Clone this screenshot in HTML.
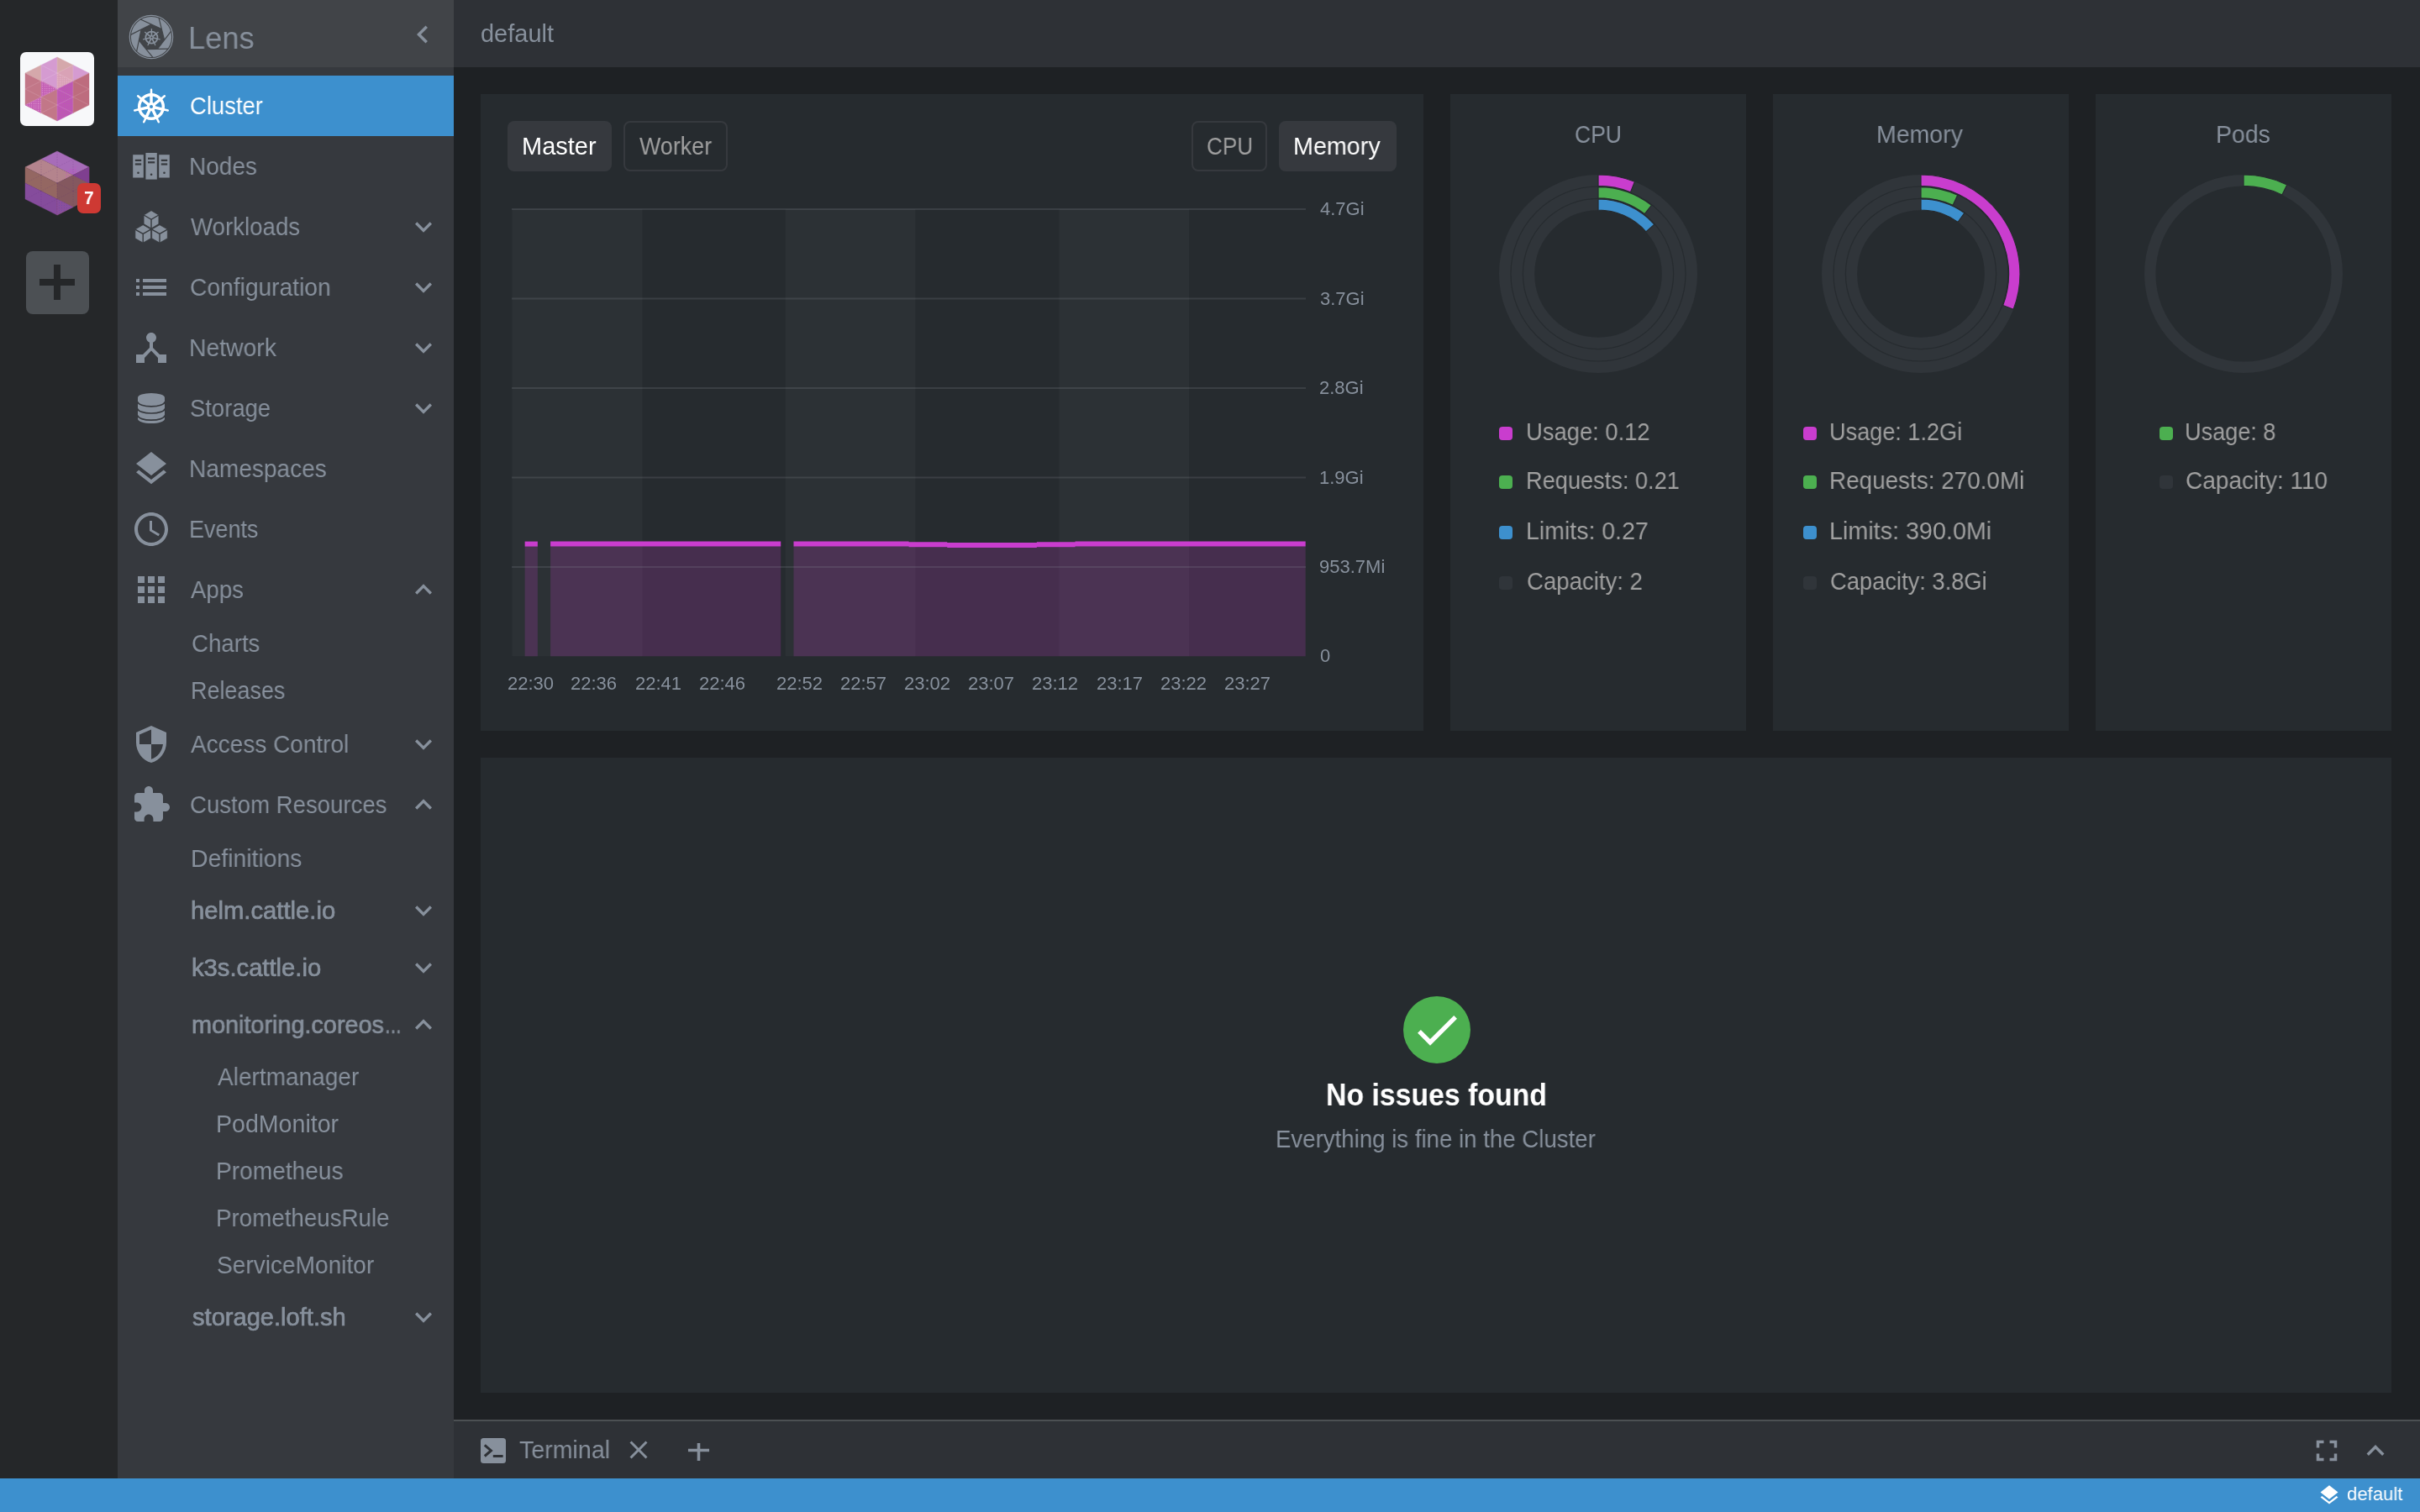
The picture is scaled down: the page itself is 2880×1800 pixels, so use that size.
<!DOCTYPE html>
<html lang="en"><head><meta charset="utf-8"><title>Lens</title>
<style>
html,body{margin:0;padding:0;background:#1e2124;}
body{width:2880px;height:1800px;position:relative;overflow:hidden;font-family:"Liberation Sans",sans-serif;}
.b{position:absolute;}
.tx{position:absolute;white-space:nowrap;line-height:1;will-change:transform;transform-origin:0 0;}
.ic{position:absolute;overflow:visible;}
.md{-webkit-text-stroke:0.7px currentColor;}
@media (max-width:1440px){body{zoom:.5}}
</style></head><body>

<div class="b" style="left:0px;top:0px;width:140px;height:1760px;background:#252729;"></div>
<div class="b" style="left:24px;top:62px;width:88px;height:88px;background:#f7f8fa;border-radius:7px"></div>
<svg class="ic" style="left:0;top:0" width="140" height="400" viewBox="0 0 140 400"><defs><pattern id="dotsA" width="2.6" height="2.6" patternUnits="userSpaceOnUse"><circle cx="1.3" cy="1.3" r="0.6" fill="#c93dce" fill-opacity="0.75"/></pattern><pattern id="dotsB" width="2.6" height="2.6" patternUnits="userSpaceOnUse"><circle cx="1.3" cy="1.3" r="0.55" fill="#f0c0e0" fill-opacity="0.7"/></pattern><pattern id="dotsC" width="3" height="3" patternUnits="userSpaceOnUse"><circle cx="1.5" cy="1.5" r="0.6" fill="#5b4aa8" fill-opacity="0.55"/></pattern></defs><polygon fill="#d5a8ab" stroke="#d5a8ab" stroke-width="0.4" points="30,87 49,77.5 49,96.5"/><polygon fill="#d59bd1" stroke="#d59bd1" stroke-width="0.4" points="49,77.5 68,68 68,106 49,96.5"/><polygon fill="#d5a8ab" stroke="#d5a8ab" stroke-width="0.4" points="68,68 87,77.5 87,96.5 68,106"/><polygon fill="#d9a2b6" stroke="#d9a2b6" stroke-width="0.4" points="68,87 87,77.5 87,96.5 68,106"/><polygon fill="#d59bd1" stroke="#d59bd1" stroke-width="0.4" points="87,77.5 106,87 87,96.5"/><polygon fill="#c27788" stroke="#c27788" stroke-width="0.4" points="30,87 49,96.5 49,134.5 30,125"/><polygon fill="#c45fb5" stroke="#c45fb5" stroke-width="0.4" points="30,125 49,115.5 49,134.5"/><polygon fill="#c27788" stroke="#c27788" stroke-width="0.4" points="49,96.5 68,106 68,144 49,134.5"/><polygon fill="#c45fb5" stroke="#c45fb5" stroke-width="0.4" points="49,96.5 68,106 49,115.5"/><polygon fill="#bb5cb0" stroke="#bb5cb0" stroke-width="0.4" points="68,106 87,96.5 87,134.5 68,144"/><polygon fill="#bd6c7e" stroke="#bd6c7e" stroke-width="0.4" points="87,96.5 106,87 106,125 87,134.5"/><polygon fill="url(#dotsA)" points="68,106 87,96.5 87,134.5 68,144"/><polygon fill="url(#dotsB)" points="49,96.5 68,106 49,115.5"/><polygon fill="url(#dotsB)" points="30,125 49,115.5 49,134.5"/><polygon fill="url(#dotsB)" points="68,87 87,96.5 68,106"/><path d="M68.0 87.0L87.0 96.5M68.0 87.0L87.0 77.5M87.0 96.5L87.0 77.5M68 106L68 68M87.0 96.5L87.0 115.5M87.0 96.5L106.0 106.0M87.0 115.5L106.0 106.0M68 106L106 87M87.0 115.5L68.0 125.0M87.0 115.5L87.0 134.5M68.0 125.0L87.0 134.5M68 106L106 125M68.0 125.0L49.0 115.5M68.0 125.0L49.0 134.5M49.0 115.5L49.0 134.5M68 106L68 144M49.0 115.5L49.0 96.5M49.0 115.5L30.0 106.0M49.0 96.5L30.0 106.0M68 106L30 125M49.0 96.5L68.0 87.0M49.0 96.5L49.0 77.5M68.0 87.0L49.0 77.5M68 106L30 87" stroke="#ffffff" stroke-opacity="0.22" stroke-width="0.6" fill="none" /><polygon fill="#a76cb9" stroke="#a76cb9" stroke-width="0.4" points="49,189.5 68,180 106,199 87,208.5"/><polygon fill="#b4848d" stroke="#b4848d" stroke-width="0.4" points="30,199 49,189.5 87,208.5 68,218"/><polygon fill="#946762" stroke="#946762" stroke-width="0.4" points="30,199 68,218 68,237 30,218"/><polygon fill="#854c9c" stroke="#854c9c" stroke-width="0.4" points="30,218 68,237 68,256 30,237"/><polygon fill="#84585f" stroke="#84585f" stroke-width="0.4" points="68,218 106,199 106,237 68,256"/><polygon fill="#7f3f90" stroke="#7f3f90" stroke-width="0.4" points="87,208.5 106,199 106,218"/><polygon fill="#8a4f9c" stroke="#8a4f9c" stroke-width="0.4" points="68,237 87,246.5 68,256"/><polygon fill="url(#dotsC)" points="68,237 87,246.5 68,256"/><polygon fill="url(#dotsA)" points="77,204 92,197 92,206 77,213"/><path d="M68.0 199.0L87.0 208.5M68.0 199.0L87.0 189.5M87.0 208.5L87.0 189.5M68 218L68 180M87.0 208.5L87.0 227.5M87.0 208.5L106.0 218.0M87.0 227.5L106.0 218.0M68 218L106 199M87.0 227.5L68.0 237.0M87.0 227.5L87.0 246.5M68.0 237.0L87.0 246.5M68 218L106 237M68.0 237.0L49.0 227.5M68.0 237.0L49.0 246.5M49.0 227.5L49.0 246.5M68 218L68 256M49.0 227.5L49.0 208.5M49.0 227.5L30.0 218.0M49.0 208.5L30.0 218.0M68 218L30 237M49.0 208.5L68.0 199.0M49.0 208.5L49.0 189.5M68.0 199.0L49.0 189.5M68 218L30 199" stroke="#5b2a78" stroke-opacity="0.28" stroke-width="0.7" fill="none" stroke-dasharray="1.5 1.5"/></svg>
<div class="b" style="left:92px;top:218px;width:28px;height:36px;background:#ce3933;border-radius:7px"></div>
<div class="b" style="left:30.5px;top:298.5px;width:75px;height:75px;background:#4c5054;border-radius:8px"></div>
<div class="b" style="left:47px;top:332px;width:42px;height:8px;background:#252729;"></div>
<div class="b" style="left:64px;top:315px;width:8px;height:42px;background:#252729;"></div>
<div class="b" style="left:140px;top:0px;width:400px;height:1760px;background:#36393e;"></div>
<div class="b" style="left:140px;top:0px;width:400px;height:80px;background:#414448;"></div>
<svg class="ic" style="left:0;top:0" width="540" height="80" viewBox="0 0 540 80"><circle cx="180" cy="44" r="25.7" fill="none" stroke="#87909c" stroke-width="1.2"/><circle cx="180" cy="44" r="24.1" fill="#87909c"/><polygon points="180.13,29.00 192.35,34.63 195.57,47.68 187.37,58.35 173.92,58.58 165.35,48.21 168.11,35.05" fill="#414448"/><g stroke="#414448" stroke-width="1.2"><line x1="192.35" y1="34.63" x2="167.14" y2="23.03"/><line x1="195.57" y1="47.68" x2="189.01" y2="21.11"/><line x1="187.37" y1="58.35" x2="203.64" y2="37.19"/><line x1="173.92" y1="58.58" x2="200.14" y2="58.12"/><line x1="165.35" y1="48.21" x2="182.12" y2="68.51"/><line x1="168.11" y1="35.05" x2="162.59" y2="61.38"/><line x1="180.13" y1="29.00" x2="155.54" y2="41.38"/></g><g stroke="#87909c" stroke-width="1.58" stroke-linecap="round" fill="none"><circle cx="180.4" cy="44.6" r="7.08" stroke-width="1.73"/><line x1="180.4" y1="44.6" x2="180.40" y2="37.18" stroke-width="1.73"/><line x1="180.40" y1="37.18" x2="180.40" y2="34.55" stroke-width="1.24"/><line x1="180.4" y1="44.6" x2="186.21" y2="39.97" stroke-width="1.73"/><line x1="186.21" y1="39.97" x2="188.26" y2="38.33" stroke-width="1.24"/><line x1="180.4" y1="44.6" x2="187.64" y2="46.25" stroke-width="1.73"/><line x1="187.64" y1="46.25" x2="190.20" y2="46.84" stroke-width="1.24"/><line x1="180.4" y1="44.6" x2="183.62" y2="51.29" stroke-width="1.73"/><line x1="183.62" y1="51.29" x2="184.76" y2="53.65" stroke-width="1.24"/><line x1="180.4" y1="44.6" x2="177.18" y2="51.29" stroke-width="1.73"/><line x1="177.18" y1="51.29" x2="176.04" y2="53.65" stroke-width="1.24"/><line x1="180.4" y1="44.6" x2="173.16" y2="46.25" stroke-width="1.73"/><line x1="173.16" y1="46.25" x2="170.60" y2="46.84" stroke-width="1.24"/><line x1="180.4" y1="44.6" x2="174.59" y2="39.97" stroke-width="1.73"/><line x1="174.59" y1="39.97" x2="172.54" y2="38.33" stroke-width="1.24"/></g><circle cx="180.4" cy="44.6" r="2.57" fill="#87909c"/><circle cx="180.4" cy="44.6" r="0.99" fill="#414448"/></svg>
<svg class="ic" style="left:482.00px;top:20.00px" width="42" height="42" viewBox="0 0 24 24"><path fill="#87909c" d="M15.41 16.59L10.83 12l4.59-4.59L14 6l-6 6 6 6 1.41-1.41z"/></svg>
<div class="b" style="left:140px;top:90px;width:400px;height:72px;background:#3d90ce;"></div>
<svg class="ic" style="left:0;top:0" width="540" height="1760" viewBox="0 0 540 1760"><g stroke="#ffffff" stroke-width="3.20" stroke-linecap="round" fill="none"><circle cx="180" cy="127" r="14.30" stroke-width="3.50"/><line x1="180" y1="127" x2="180.00" y2="112.00" stroke-width="3.50"/><line x1="180.00" y1="112.00" x2="180.00" y2="106.70" stroke-width="2.50"/><line x1="180" y1="127" x2="191.73" y2="117.65" stroke-width="3.50"/><line x1="191.73" y1="117.65" x2="195.87" y2="114.34" stroke-width="2.50"/><line x1="180" y1="127" x2="194.62" y2="130.34" stroke-width="3.50"/><line x1="194.62" y1="130.34" x2="199.79" y2="131.52" stroke-width="2.50"/><line x1="180" y1="127" x2="186.51" y2="140.51" stroke-width="3.50"/><line x1="186.51" y1="140.51" x2="188.81" y2="145.29" stroke-width="2.50"/><line x1="180" y1="127" x2="173.49" y2="140.51" stroke-width="3.50"/><line x1="173.49" y1="140.51" x2="171.19" y2="145.29" stroke-width="2.50"/><line x1="180" y1="127" x2="165.38" y2="130.34" stroke-width="3.50"/><line x1="165.38" y1="130.34" x2="160.21" y2="131.52" stroke-width="2.50"/><line x1="180" y1="127" x2="168.27" y2="117.65" stroke-width="3.50"/><line x1="168.27" y1="117.65" x2="164.13" y2="114.34" stroke-width="2.50"/></g><circle cx="180" cy="127" r="5.20" fill="#ffffff"/><circle cx="180" cy="127" r="2.00" fill="#3d90ce"/><rect x="158.2" y="184.2" width="12.600000000000023" height="27.30000000000001" fill="#87909c"/><rect x="160.79999999999998" y="189.79999999999998" width="7.400000000000023" height="2.2" fill="#36393e"/><rect x="160.79999999999998" y="194.39999999999998" width="7.400000000000023" height="2.2" fill="#36393e"/><circle cx="164.5" cy="205.7" r="1.3" fill="#36393e"/><rect x="173.4" y="182" width="13.400000000000006" height="31.599999999999994" fill="#87909c"/><rect x="176.0" y="187.6" width="8.200000000000006" height="2.2" fill="#36393e"/><rect x="176.0" y="192.2" width="8.200000000000006" height="2.2" fill="#36393e"/><circle cx="180.10000000000002" cy="207.79999999999998" r="1.3" fill="#36393e"/><rect x="189.2" y="184.2" width="12.600000000000023" height="27.30000000000001" fill="#87909c"/><rect x="191.79999999999998" y="189.79999999999998" width="7.400000000000023" height="2.2" fill="#36393e"/><rect x="191.79999999999998" y="194.39999999999998" width="7.400000000000023" height="2.2" fill="#36393e"/><circle cx="195.5" cy="205.7" r="1.3" fill="#36393e"/><polygon fill="#87909c" stroke="#36393e" stroke-width="0.7" points="180.00,250.70 188.90,256.00 188.90,266.60 180.00,271.90 171.10,266.60 171.10,256.00"/><path d="M171.10 256.00L180 261.3L188.90 256.00M180 261.3L180 271.90000000000003" stroke="#36393e" stroke-width="1.4" fill="none"/><polygon fill="#87909c" stroke="#36393e" stroke-width="0.7" points="170.20,267.70 179.50,273.05 179.50,283.75 170.20,289.10 160.90,283.75 160.90,273.05"/><path d="M160.90 273.05L170.2 278.4L179.50 273.05M170.2 278.4L170.2 289.09999999999997" stroke="#36393e" stroke-width="1.4" fill="none"/><polygon fill="#87909c" stroke="#36393e" stroke-width="0.7" points="190.00,267.70 199.30,273.05 199.30,283.75 190.00,289.10 180.70,283.75 180.70,273.05"/><path d="M180.70 273.05L190 278.4L199.30 273.05M190 278.4L190 289.09999999999997" stroke="#36393e" stroke-width="1.4" fill="none"/><path fill="#87909c" d="M164 473.5v25c0 3.2 7.2 5.6 16 5.6s16-2.4 16-5.6v-25z"/><ellipse cx="180" cy="473.5" rx="16" ry="5.5" fill="#87909c"/><path d="M164 478.2c0 3.2 7.2 5.6 16 5.6s16-2.4 16-5.6" stroke="#36393e" stroke-width="1.7" fill="none"/><path d="M164 486.4c0 3.2 7.2 5.6 16 5.6s16-2.4 16-5.6" stroke="#36393e" stroke-width="1.7" fill="none"/><path d="M164 494.6c0 3.2 7.2 5.6 16 5.6s16-2.4 16-5.6" stroke="#36393e" stroke-width="1.7" fill="none"/></svg>
<svg class="ic" style="left:156.00px;top:318.00px" width="48" height="48" viewBox="0 0 24 24"><path fill="#87909c" d="M3 13h2v-2H3v2zm0 4h2v-2H3v2zm0-8h2V7H3v2zm4 4h14v-2H7v2zm0 4h14v-2H7v2zM7 7v2h14V7H7z"/></svg>
<svg class="ic" style="left:156.00px;top:390.00px" width="48" height="48" viewBox="0 0 24 24"><path fill="#87909c" d="M17 16l-4-4V8.82C14.16 8.4 15 7.3 15 6c0-1.66-1.34-3-3-3S9 4.34 9 6c0 1.3.84 2.4 2 2.82V12l-4 4H3v5h5v-3.05l4-4.2 4 4.2V21h5v-5h-4z"/></svg>
<svg class="ic" style="left:156.00px;top:534.00px" width="48" height="48" viewBox="0 0 24 24"><path fill="#87909c" d="M11.99 18.54l-7.37-5.73L3 14.07l9 7 9-7-1.63-1.27-7.38 5.74zM12 16l7.36-5.73L21 9l-9-7-9 7 1.63 1.27L12 16z"/></svg>
<svg class="ic" style="left:156.00px;top:606.00px" width="48" height="48" viewBox="0 0 24 24"><path fill="#87909c" d="M11.99 2C6.47 2 2 6.48 2 12s4.47 10 9.99 10C17.52 22 22 17.52 22 12S17.52 2 11.99 2zM12 20c-4.42 0-8-3.58-8-8s3.58-8 8-8 8 3.58 8 8-3.58 8-8 8zm.5-13H11v6l5.25 3.15.75-1.23-4.5-2.67z"/></svg>
<svg class="ic" style="left:156.00px;top:678.00px" width="48" height="48" viewBox="0 0 24 24"><path fill="#87909c" d="M4 8h4V4H4v4zm6 12h4v-4h-4v4zm-6 0h4v-4H4v4zm0-6h4v-4H4v4zm6 0h4v-4h-4v4zm6-10v4h4V4h-4zm-6 4h4V4h-4v4zm6 6h4v-4h-4v4zm0 6h4v-4h-4v4z"/></svg>
<svg class="ic" style="left:156.00px;top:862.00px" width="48" height="48" viewBox="0 0 24 24"><path fill="#87909c" d="M12 1L3 5v6c0 5.55 3.84 10.74 9 12 5.16-1.26 9-6.45 9-12V5l-9-4zm0 10.99h7c-.53 4.12-3.28 7.79-7 8.94V12H5V6.3l7-3.11v8.8z"/></svg>
<svg class="ic" style="left:156.00px;top:934.00px" width="48" height="48" viewBox="0 0 24 24"><path fill="#87909c" d="M20.5 11H19V7c0-1.1-.9-2-2-2h-4V3.5C13 2.12 11.88 1 10.5 1S8 2.12 8 3.5V5H4c-1.1 0-1.99.9-1.99 2v3.8H3.5c1.49 0 2.7 1.21 2.7 2.7s-1.21 2.7-2.7 2.7H2V20c0 1.1.9 2 2 2h3.8v-1.5c0-1.49 1.21-2.7 2.7-2.7 1.49 0 2.7 1.21 2.7 2.7V22H17c1.1 0 2-.9 2-2v-4h1.5c1.38 0 2.5-1.12 2.5-2.5S21.88 11 20.5 11z"/></svg>
<svg class="ic" style="left:484.00px;top:250.00px" width="40" height="40" viewBox="0 0 24 24"><path fill="#87909c" d="M7.41 8.59L12 13.17l4.59-4.58L18 10l-6 6-6-6 1.41-1.41z"/></svg>
<svg class="ic" style="left:484.00px;top:322.00px" width="40" height="40" viewBox="0 0 24 24"><path fill="#87909c" d="M7.41 8.59L12 13.17l4.59-4.58L18 10l-6 6-6-6 1.41-1.41z"/></svg>
<svg class="ic" style="left:484.00px;top:394.00px" width="40" height="40" viewBox="0 0 24 24"><path fill="#87909c" d="M7.41 8.59L12 13.17l4.59-4.58L18 10l-6 6-6-6 1.41-1.41z"/></svg>
<svg class="ic" style="left:484.00px;top:466.00px" width="40" height="40" viewBox="0 0 24 24"><path fill="#87909c" d="M7.41 8.59L12 13.17l4.59-4.58L18 10l-6 6-6-6 1.41-1.41z"/></svg>
<svg class="ic" style="left:484.00px;top:682.00px" width="40" height="40" viewBox="0 0 24 24"><path fill="#87909c" d="M7.41 15.41L12 10.83l4.59 4.58L18 14l-6-6-6 6z"/></svg>
<svg class="ic" style="left:484.00px;top:866.00px" width="40" height="40" viewBox="0 0 24 24"><path fill="#87909c" d="M7.41 8.59L12 13.17l4.59-4.58L18 10l-6 6-6-6 1.41-1.41z"/></svg>
<svg class="ic" style="left:484.00px;top:938.00px" width="40" height="40" viewBox="0 0 24 24"><path fill="#87909c" d="M7.41 15.41L12 10.83l4.59 4.58L18 14l-6-6-6 6z"/></svg>
<svg class="ic" style="left:484.00px;top:1064.00px" width="40" height="40" viewBox="0 0 24 24"><path fill="#87909c" d="M7.41 8.59L12 13.17l4.59-4.58L18 10l-6 6-6-6 1.41-1.41z"/></svg>
<svg class="ic" style="left:484.00px;top:1132.00px" width="40" height="40" viewBox="0 0 24 24"><path fill="#87909c" d="M7.41 8.59L12 13.17l4.59-4.58L18 10l-6 6-6-6 1.41-1.41z"/></svg>
<svg class="ic" style="left:484.00px;top:1200.00px" width="40" height="40" viewBox="0 0 24 24"><path fill="#87909c" d="M7.41 15.41L12 10.83l4.59 4.58L18 14l-6-6-6 6z"/></svg>
<svg class="ic" style="left:484.00px;top:1548.00px" width="40" height="40" viewBox="0 0 24 24"><path fill="#87909c" d="M7.41 8.59L12 13.17l4.59-4.58L18 10l-6 6-6-6 1.41-1.41z"/></svg>
<div class="b" style="left:540px;top:0px;width:2340px;height:80px;background:#2e3136;"></div>
<div class="b" style="left:572px;top:112px;width:1122px;height:758px;background:#262b2f;"></div>
<div class="b" style="left:1726px;top:112px;width:352px;height:758px;background:#262b2f;"></div>
<div class="b" style="left:2110px;top:112px;width:352px;height:758px;background:#262b2f;"></div>
<div class="b" style="left:2494px;top:112px;width:352px;height:758px;background:#262b2f;"></div>
<div class="b" style="left:572px;top:902px;width:2274px;height:756px;background:#262b2f;"></div>
<div class="b" style="left:604px;top:144px;width:124px;height:60px;background:#36393e;border-radius:8px"></div>
<div class="b" style="left:742px;top:144px;width:120px;height:56px;background:transparent;border:2px solid #36393e;border-radius:8px"></div>
<div class="b" style="left:1418px;top:144px;width:86px;height:56px;background:transparent;border:2px solid #36393e;border-radius:8px"></div>
<div class="b" style="left:1522px;top:144px;width:140px;height:60px;background:#36393e;border-radius:8px"></div>
<svg class="ic" style="left:0;top:0" width="2880" height="900" viewBox="0 0 2880 900"><rect x="609.4" y="249.0" width="155.2" height="532.3" fill="#ffffff" fill-opacity="0.031"/><rect x="934.7" y="249.0" width="154.7" height="532.3" fill="#ffffff" fill-opacity="0.031"/><rect x="1260.5" y="249.0" width="154.7" height="532.3" fill="#ffffff" fill-opacity="0.031"/><path d="M624.63 650.60 L639.86 650.60 L639.86 781.3 L624.63 781.3Z" fill="#c93dce" fill-opacity="0.2"/><path d="M624.63 644.60 L639.86 644.60 L639.86 650.60 L624.63 650.60Z" fill="#c93dce"/><path d="M655.09 650.60 L670.32 650.60 L670.32 650.60 L685.55 650.60 L685.55 650.60 L700.78 650.60 L700.78 650.60 L716.01 650.60 L716.01 650.60 L731.25 650.60 L731.25 650.60 L746.48 650.60 L746.48 650.60 L761.71 650.60 L761.71 650.60 L776.94 650.60 L776.94 650.60 L792.17 650.60 L792.17 650.60 L807.40 650.60 L807.40 650.60 L822.63 650.60 L822.63 650.60 L837.86 650.60 L837.86 650.60 L853.09 650.60 L853.09 650.60 L868.32 650.60 L868.32 650.60 L883.55 650.60 L883.55 650.60 L898.78 650.60 L898.78 650.60 L914.01 650.60 L914.01 650.60 L929.24 650.60 L929.24 781.3 L655.09 781.3Z" fill="#c93dce" fill-opacity="0.2"/><path d="M655.09 644.60 L670.32 644.60 L670.32 644.60 L685.55 644.60 L685.55 644.60 L700.78 644.60 L700.78 644.60 L716.01 644.60 L716.01 644.60 L731.25 644.60 L731.25 644.60 L746.48 644.60 L746.48 644.60 L761.71 644.60 L761.71 644.60 L776.94 644.60 L776.94 644.60 L792.17 644.60 L792.17 644.60 L807.40 644.60 L807.40 644.60 L822.63 644.60 L822.63 644.60 L837.86 644.60 L837.86 644.60 L853.09 644.60 L853.09 644.60 L868.32 644.60 L868.32 644.60 L883.55 644.60 L883.55 644.60 L898.78 644.60 L898.78 644.60 L914.01 644.60 L914.01 644.60 L929.24 644.60 L929.24 650.60 L914.01 650.60 L914.01 650.60 L898.78 650.60 L898.78 650.60 L883.55 650.60 L883.55 650.60 L868.32 650.60 L868.32 650.60 L853.09 650.60 L853.09 650.60 L837.86 650.60 L837.86 650.60 L822.63 650.60 L822.63 650.60 L807.40 650.60 L807.40 650.60 L792.17 650.60 L792.17 650.60 L776.94 650.60 L776.94 650.60 L761.71 650.60 L761.71 650.60 L746.48 650.60 L746.48 650.60 L731.25 650.60 L731.25 650.60 L716.01 650.60 L716.01 650.60 L700.78 650.60 L700.78 650.60 L685.55 650.60 L685.55 650.60 L670.32 650.60 L670.32 650.60 L655.09 650.60Z" fill="#c93dce"/><path d="M944.47 650.60 L959.70 650.60 L959.70 650.60 L974.94 650.60 L974.94 650.60 L990.17 650.60 L990.17 650.60 L1005.40 650.60 L1005.40 650.60 L1020.63 650.60 L1020.63 650.60 L1035.86 650.60 L1035.86 650.60 L1051.09 650.60 L1051.09 650.60 L1066.32 650.60 L1066.32 650.60 L1081.55 650.60 L1081.55 651.30 L1096.78 651.30 L1096.78 651.30 L1112.01 651.30 L1112.01 651.30 L1127.24 651.30 L1127.24 652.10 L1142.47 652.10 L1142.47 652.10 L1157.70 652.10 L1157.70 652.10 L1172.93 652.10 L1172.93 652.10 L1188.16 652.10 L1188.16 652.10 L1203.40 652.10 L1203.40 652.10 L1218.63 652.10 L1218.63 652.10 L1233.86 652.10 L1233.86 651.30 L1249.09 651.30 L1249.09 651.30 L1264.32 651.30 L1264.32 651.30 L1279.55 651.30 L1279.55 650.60 L1294.78 650.60 L1294.78 650.60 L1310.01 650.60 L1310.01 650.60 L1325.24 650.60 L1325.24 650.60 L1340.47 650.60 L1340.47 650.60 L1355.70 650.60 L1355.70 650.60 L1370.93 650.60 L1370.93 650.60 L1386.16 650.60 L1386.16 650.60 L1401.39 650.60 L1401.39 650.60 L1416.62 650.60 L1416.62 650.60 L1431.85 650.60 L1431.85 650.60 L1447.09 650.60 L1447.09 650.60 L1462.32 650.60 L1462.32 650.60 L1477.55 650.60 L1477.55 650.60 L1492.78 650.60 L1492.78 650.60 L1508.01 650.60 L1508.01 650.60 L1523.24 650.60 L1523.24 650.60 L1538.47 650.60 L1538.47 650.60 L1553.70 650.60 L1553.70 781.3 L944.47 781.3Z" fill="#c93dce" fill-opacity="0.2"/><path d="M944.47 644.60 L959.70 644.60 L959.70 644.60 L974.94 644.60 L974.94 644.60 L990.17 644.60 L990.17 644.60 L1005.40 644.60 L1005.40 644.60 L1020.63 644.60 L1020.63 644.60 L1035.86 644.60 L1035.86 644.60 L1051.09 644.60 L1051.09 644.60 L1066.32 644.60 L1066.32 644.60 L1081.55 644.60 L1081.55 645.30 L1096.78 645.30 L1096.78 645.30 L1112.01 645.30 L1112.01 645.30 L1127.24 645.30 L1127.24 646.10 L1142.47 646.10 L1142.47 646.10 L1157.70 646.10 L1157.70 646.10 L1172.93 646.10 L1172.93 646.10 L1188.16 646.10 L1188.16 646.10 L1203.40 646.10 L1203.40 646.10 L1218.63 646.10 L1218.63 646.10 L1233.86 646.10 L1233.86 645.30 L1249.09 645.30 L1249.09 645.30 L1264.32 645.30 L1264.32 645.30 L1279.55 645.30 L1279.55 644.60 L1294.78 644.60 L1294.78 644.60 L1310.01 644.60 L1310.01 644.60 L1325.24 644.60 L1325.24 644.60 L1340.47 644.60 L1340.47 644.60 L1355.70 644.60 L1355.70 644.60 L1370.93 644.60 L1370.93 644.60 L1386.16 644.60 L1386.16 644.60 L1401.39 644.60 L1401.39 644.60 L1416.62 644.60 L1416.62 644.60 L1431.85 644.60 L1431.85 644.60 L1447.09 644.60 L1447.09 644.60 L1462.32 644.60 L1462.32 644.60 L1477.55 644.60 L1477.55 644.60 L1492.78 644.60 L1492.78 644.60 L1508.01 644.60 L1508.01 644.60 L1523.24 644.60 L1523.24 644.60 L1538.47 644.60 L1538.47 644.60 L1553.70 644.60 L1553.70 650.60 L1538.47 650.60 L1538.47 650.60 L1523.24 650.60 L1523.24 650.60 L1508.01 650.60 L1508.01 650.60 L1492.78 650.60 L1492.78 650.60 L1477.55 650.60 L1477.55 650.60 L1462.32 650.60 L1462.32 650.60 L1447.09 650.60 L1447.09 650.60 L1431.85 650.60 L1431.85 650.60 L1416.62 650.60 L1416.62 650.60 L1401.39 650.60 L1401.39 650.60 L1386.16 650.60 L1386.16 650.60 L1370.93 650.60 L1370.93 650.60 L1355.70 650.60 L1355.70 650.60 L1340.47 650.60 L1340.47 650.60 L1325.24 650.60 L1325.24 650.60 L1310.01 650.60 L1310.01 650.60 L1294.78 650.60 L1294.78 650.60 L1279.55 650.60 L1279.55 651.30 L1264.32 651.30 L1264.32 651.30 L1249.09 651.30 L1249.09 651.30 L1233.86 651.30 L1233.86 652.10 L1218.63 652.10 L1218.63 652.10 L1203.40 652.10 L1203.40 652.10 L1188.16 652.10 L1188.16 652.10 L1172.93 652.10 L1172.93 652.10 L1157.70 652.10 L1157.70 652.10 L1142.47 652.10 L1142.47 652.10 L1127.24 652.10 L1127.24 651.30 L1112.01 651.30 L1112.01 651.30 L1096.78 651.30 L1096.78 651.30 L1081.55 651.30 L1081.55 650.60 L1066.32 650.60 L1066.32 650.60 L1051.09 650.60 L1051.09 650.60 L1035.86 650.60 L1035.86 650.60 L1020.63 650.60 L1020.63 650.60 L1005.40 650.60 L1005.40 650.60 L990.17 650.60 L990.17 650.60 L974.94 650.60 L974.94 650.60 L959.70 650.60 L959.70 650.60 L944.47 650.60Z" fill="#c93dce"/><rect x="609" y="248.00" width="945" height="2" fill="#8a9099" fill-opacity="0.2"/><rect x="609" y="354.50" width="945" height="2" fill="#8a9099" fill-opacity="0.2"/><rect x="609" y="461.00" width="945" height="2" fill="#8a9099" fill-opacity="0.2"/><rect x="609" y="567.50" width="945" height="2" fill="#8a9099" fill-opacity="0.2"/><rect x="609" y="674.00" width="945" height="2" fill="#8a9099" fill-opacity="0.2"/></svg>
<svg class="ic" style="left:0;top:0" width="2880" height="900" viewBox="0 0 2880 900"><circle cx="1902" cy="326" r="111.3" fill="none" stroke="#30353a" stroke-width="13.40"/><path d="M1902.00 208.00A118 118 0 0 1 1945.44 216.29L1940.51 228.75A104.6 104.6 0 0 0 1902.00 221.40Z" fill="#c93dce" stroke="#262b2f" stroke-width="1.2"/><circle cx="1902" cy="326" r="96.80000000000001" fill="none" stroke="#30353a" stroke-width="13.20"/><path d="M1902.00 222.60A103.4 103.4 0 0 1 1965.37 244.30L1957.28 254.73A90.2 90.2 0 0 0 1902.00 235.80Z" fill="#4caf50" stroke="#262b2f" stroke-width="1.2"/><circle cx="1902" cy="326" r="82.4" fill="none" stroke="#30353a" stroke-width="13.20"/><path d="M1902.00 237.00A89.0 89.0 0 0 1 1968.76 267.14L1958.86 275.87A75.8 75.8 0 0 0 1902.00 250.20Z" fill="#3d90ce" stroke="#262b2f" stroke-width="1.2"/><circle cx="2286" cy="326" r="111.3" fill="none" stroke="#30353a" stroke-width="13.40"/><path d="M2286.00 208.00A118 118 0 0 1 2396.16 368.29L2383.65 363.49A104.6 104.6 0 0 0 2286.00 221.40Z" fill="#c93dce" stroke="#262b2f" stroke-width="1.2"/><circle cx="2286" cy="326" r="96.80000000000001" fill="none" stroke="#30353a" stroke-width="13.20"/><path d="M2286.00 222.60A103.4 103.4 0 0 1 2329.70 232.29L2324.12 244.25A90.2 90.2 0 0 0 2286.00 235.80Z" fill="#4caf50" stroke="#262b2f" stroke-width="1.2"/><circle cx="2286" cy="326" r="82.4" fill="none" stroke="#30353a" stroke-width="13.20"/><path d="M2286.00 237.00A89.0 89.0 0 0 1 2337.81 253.63L2330.12 264.37A75.8 75.8 0 0 0 2286.00 250.20Z" fill="#3d90ce" stroke="#262b2f" stroke-width="1.2"/><circle cx="2670" cy="326" r="111.3" fill="none" stroke="#30353a" stroke-width="13.40"/><path d="M2670.00 208.00A118 118 0 0 1 2721.73 219.94L2715.85 231.99A104.6 104.6 0 0 0 2670.00 221.40Z" fill="#4caf50" stroke="#262b2f" stroke-width="1.2"/><rect x="1784" y="508" width="16" height="16" rx="4" fill="#c93dce"/><rect x="1784" y="566" width="16" height="16" rx="4" fill="#4caf50"/><rect x="1784" y="626" width="16" height="16" rx="4" fill="#3d90ce"/><rect x="1784" y="686" width="16" height="16" rx="4" fill="#30353a"/><rect x="2146" y="508" width="16" height="16" rx="4" fill="#c93dce"/><rect x="2146" y="566" width="16" height="16" rx="4" fill="#4caf50"/><rect x="2146" y="626" width="16" height="16" rx="4" fill="#3d90ce"/><rect x="2146" y="686" width="16" height="16" rx="4" fill="#30353a"/><rect x="2570" y="508" width="16" height="16" rx="4" fill="#4caf50"/><rect x="2570" y="566" width="16" height="16" rx="4" fill="#30353a"/></svg>
<div class="b" style="left:1670px;top:1186px;width:80px;height:80px;border-radius:50%;background:#4caf50"></div><svg class="ic" style="left:1678.00px;top:1194.00px" width="64" height="64" viewBox="0 0 24 24"><path fill="#ffffff" d="M9 16.17L4.83 12l-1.42 1.41L9 19 21 7l-1.41-1.41z"/></svg>
<div class="b" style="left:540px;top:1690px;width:2340px;height:2px;background:#4c5053;"></div>
<div class="b" style="left:540px;top:1692px;width:2340px;height:68px;background:#2e3136;"></div>
<svg class="ic" style="left:540px;top:1692px" width="400" height="68" viewBox="540 1692 400 68"><rect x="572" y="1712" width="30" height="30" rx="3.5" fill="#87909c"/><path d="M576.8 1720.3l7.6 6.6-7.6 6.6" stroke="#2e3136" stroke-width="3" fill="none"/><rect x="586.8" y="1732.0" width="11.8" height="3" fill="#2e3136"/></svg>
<svg class="ic" style="left:742.20px;top:1707.80px" width="36" height="36" viewBox="0 0 24 24"><path fill="#87909c" d="M19 6.41L17.59 5 12 10.59 6.41 5 5 6.41 10.59 12 5 17.59 6.41 19 12 13.41 17.59 19 19 17.59 13.41 12z"/></svg>
<svg class="ic" style="left:810.10px;top:1705.20px" width="43" height="43" viewBox="0 0 24 24"><path fill="#87909c" d="M19 13h-6v6h-2v-6H5v-2h6V7.3h2V11h6v2z"/></svg>
<svg class="ic" style="left:2748.00px;top:1706.00px" width="42" height="42" viewBox="0 0 24 24"><path fill="#87909c" d="M7 14H5v5h5v-2H7v-3zm-2-4h2V7h3V5H5v5zm12 7h-3v2h5v-5h-2v3zM14 5v2h3v3h2V5h-5z"/></svg>
<svg class="ic" style="left:2806.00px;top:1706.20px" width="42" height="42" viewBox="0 0 24 24"><path fill="#87909c" d="M7.41 15.41L12 10.83l4.59 4.58L18 14l-6-6-6 6z"/></svg>
<div class="b" style="left:0px;top:1760px;width:2880px;height:40px;background:#3d90ce;"></div>
<svg class="ic" style="left:2758.40px;top:1766.20px" width="28" height="28" viewBox="0 0 24 24"><path fill="#ffffff" d="M11.99 18.54l-7.37-5.73L3 14.07l9 7 9-7-1.63-1.27-7.38 5.74zM12 16l7.36-5.73L21 9l-9-7-9 7 1.63 1.27L12 16z"/></svg>
<div class="tx " style="left:223.58px;top:27.00px;font-size:37.26px;font-weight:400;transform:scaleX(0.9721);color:#87909c">Lens</div>
<div class="tx " style="left:226.35px;top:112.00px;font-size:28.98px;font-weight:400;transform:scaleX(0.9472);color:#ffffff">Cluster</div>
<div class="tx " style="left:225.37px;top:184.00px;font-size:28.98px;font-weight:400;transform:scaleX(0.9661);color:#87909c">Nodes</div>
<div class="tx " style="left:226.80px;top:256.00px;font-size:28.98px;font-weight:400;transform:scaleX(0.9549);color:#87909c">Workloads</div>
<div class="tx " style="left:226.33px;top:328.00px;font-size:28.98px;font-weight:400;transform:scaleX(0.9730);color:#87909c">Configuration</div>
<div class="tx " style="left:225.34px;top:400.00px;font-size:28.98px;font-weight:400;transform:scaleX(0.9784);color:#87909c">Network</div>
<div class="tx " style="left:226.35px;top:472.00px;font-size:28.98px;font-weight:400;transform:scaleX(0.9472);color:#87909c">Storage</div>
<div class="tx " style="left:225.36px;top:544.00px;font-size:28.98px;font-weight:400;transform:scaleX(0.9689);color:#87909c">Namespaces</div>
<div class="tx " style="left:225.44px;top:616.00px;font-size:28.98px;font-weight:400;transform:scaleX(0.9306);color:#87909c">Events</div>
<div class="tx " style="left:226.80px;top:688.00px;font-size:28.98px;font-weight:400;transform:scaleX(0.9536);color:#87909c">Apps</div>
<div class="tx " style="left:228.33px;top:752.00px;font-size:28.57px;font-weight:400;transform:scaleX(0.9669);color:#87909c">Charts</div>
<div class="tx " style="left:227.41px;top:808.00px;font-size:28.57px;font-weight:400;transform:scaleX(0.9435);color:#87909c">Releases</div>
<div class="tx " style="left:226.80px;top:872.00px;font-size:28.98px;font-weight:400;transform:scaleX(0.9666);color:#87909c">Access Control</div>
<div class="tx " style="left:226.35px;top:944.00px;font-size:28.98px;font-weight:400;transform:scaleX(0.9521);color:#87909c">Custom Resources</div>
<div class="tx " style="left:227.31px;top:1008.00px;font-size:28.57px;font-weight:400;transform:scaleX(0.9933);color:#87909c">Definitions</div>
<div class="tx md" style="left:227.28px;top:1070.00px;font-size:28.98px;font-weight:400;transform:scaleX(1.0086);color:#87909c">helm.cattle.io</div>
<div class="tx md" style="left:228.29px;top:1138.00px;font-size:28.98px;font-weight:400;transform:scaleX(1.0076);color:#87909c">k3s.cattle.io</div>
<div class="tx md" style="left:228.31px;top:1206.00px;font-size:28.98px;font-weight:400;transform:scaleX(0.9940);color:#87909c">monitoring.coreos<span style="display:inline-block;transform:scaleX(0.7130);transform-origin:0 0;margin-left:0.39px">…</span></div>
<div class="tx " style="left:258.60px;top:1268.00px;font-size:28.57px;font-weight:400;transform:scaleX(0.9811);color:#87909c">Alertmanager</div>
<div class="tx " style="left:257.30px;top:1324.00px;font-size:28.57px;font-weight:400;color:#87909c">PodMonitor</div>
<div class="tx " style="left:257.33px;top:1380.00px;font-size:28.57px;font-weight:400;transform:scaleX(0.9841);color:#87909c">Prometheus</div>
<div class="tx " style="left:257.36px;top:1436.00px;font-size:28.57px;font-weight:400;transform:scaleX(0.9711);color:#87909c">PrometheusRule</div>
<div class="tx " style="left:258.02px;top:1492.00px;font-size:28.57px;font-weight:400;transform:scaleX(0.9828);color:#87909c">ServiceMonitor</div>
<div class="tx md" style="left:228.80px;top:1554.00px;font-size:28.98px;font-weight:400;transform:scaleX(1.0042);color:#87909c">storage.loft.sh</div>
<div class="tx " style="left:571.70px;top:26.00px;font-size:28.98px;font-weight:400;transform:scaleX(0.9962);color:#87909c">default</div>
<div class="tx " style="left:620.91px;top:160.00px;font-size:28.98px;font-weight:400;transform:scaleX(0.9956);color:#ffffff">Master</div>
<div class="tx " style="left:760.60px;top:160.00px;font-size:28.98px;font-weight:400;transform:scaleX(0.9273);color:#a0a0a0">Worker</div>
<div class="tx " style="left:1435.60px;top:160.00px;font-size:28.98px;font-weight:400;transform:scaleX(0.9014);color:#a0a0a0">CPU</div>
<div class="tx " style="left:1538.62px;top:160.00px;font-size:28.98px;font-weight:400;transform:scaleX(0.9910);color:#ffffff">Memory</div>
<div class="tx " style="left:1873.59px;top:146.00px;font-size:28.98px;font-weight:400;transform:scaleX(0.9134);color:#87909c">CPU</div>
<div class="tx " style="left:2232.93px;top:146.00px;font-size:28.98px;font-weight:400;transform:scaleX(0.9832);color:#87909c">Memory</div>
<div class="tx " style="left:2636.64px;top:146.00px;font-size:28.98px;font-weight:400;transform:scaleX(0.9820);color:#87909c">Pods</div>
<div class="tx " style="left:1816.01px;top:500.00px;font-size:28.98px;font-weight:400;transform:scaleX(0.9451);color:#a0a0a0">Usage: 0.12</div>
<div class="tx " style="left:1816.32px;top:558.00px;font-size:28.98px;font-weight:400;transform:scaleX(0.9382);color:#a0a0a0">Requests: 0.21</div>
<div class="tx " style="left:1816.23px;top:618.00px;font-size:28.98px;font-weight:400;transform:scaleX(0.9840);color:#a0a0a0">Limits: 0.27</div>
<div class="tx " style="left:1816.95px;top:678.00px;font-size:28.98px;font-weight:400;transform:scaleX(0.9517);color:#a0a0a0">Capacity: 2</div>
<div class="tx " style="left:2176.93px;top:500.00px;font-size:28.98px;font-weight:400;transform:scaleX(0.9352);color:#a0a0a0">Usage: 1.2Gi</div>
<div class="tx " style="left:2177.18px;top:558.00px;font-size:28.98px;font-weight:400;transform:scaleX(0.9618);color:#a0a0a0">Requests: 270.0Mi</div>
<div class="tx " style="left:2177.12px;top:618.00px;font-size:28.98px;font-weight:400;transform:scaleX(0.9918);color:#a0a0a0">Limits: 390.0Mi</div>
<div class="tx " style="left:2177.86px;top:678.00px;font-size:28.98px;font-weight:400;transform:scaleX(0.9427);color:#a0a0a0">Capacity: 3.8Gi</div>
<div class="tx " style="left:2600.43px;top:500.00px;font-size:28.98px;font-weight:400;transform:scaleX(0.9350);color:#a0a0a0">Usage: 8</div>
<div class="tx " style="left:2601.33px;top:558.00px;font-size:28.98px;font-weight:400;transform:scaleX(0.9666);color:#a0a0a0">Capacity: 110</div>
<div class="tx " style="left:1577.59px;top:1285.00px;font-size:37.26px;font-weight:700;transform:scaleX(0.9074);color:#ffffff">No issues found</div>
<div class="tx " style="left:1517.99px;top:1342.00px;font-size:28.98px;font-weight:400;transform:scaleX(0.9536);color:#87909c">Everything is fine in the Cluster</div>
<div class="tx " style="left:618.40px;top:1712.00px;font-size:28.98px;font-weight:400;transform:scaleX(0.9868);color:#87909c">Terminal</div>
<div class="tx " style="left:2792.50px;top:1767.00px;font-size:22.77px;font-weight:400;transform:scaleX(0.9721);color:#ffffff">default</div>
<div class="tx " style="left:100.40px;top:224.00px;font-size:22.77px;font-weight:700;transform:scaleX(0.9167);color:#ffffff">7</div>
<div class="tx " style="left:603.50px;top:803.00px;font-size:22.0px;font-weight:400;color:#87909c">22:30</div>
<div class="tx " style="left:679.30px;top:803.00px;font-size:22.0px;font-weight:400;color:#87909c">22:36</div>
<div class="tx " style="left:755.70px;top:803.00px;font-size:22.0px;font-weight:400;color:#87909c">22:41</div>
<div class="tx " style="left:832.00px;top:803.00px;font-size:22.0px;font-weight:400;color:#87909c">22:46</div>
<div class="tx " style="left:923.80px;top:803.00px;font-size:22.0px;font-weight:400;color:#87909c">22:52</div>
<div class="tx " style="left:999.70px;top:803.00px;font-size:22.0px;font-weight:400;color:#87909c">22:57</div>
<div class="tx " style="left:1076.00px;top:803.00px;font-size:22.0px;font-weight:400;color:#87909c">23:02</div>
<div class="tx " style="left:1152.40px;top:803.00px;font-size:22.0px;font-weight:400;color:#87909c">23:07</div>
<div class="tx " style="left:1228.20px;top:803.00px;font-size:22.0px;font-weight:400;color:#87909c">23:12</div>
<div class="tx " style="left:1304.60px;top:803.00px;font-size:22.0px;font-weight:400;color:#87909c">23:17</div>
<div class="tx " style="left:1381.00px;top:803.00px;font-size:22.0px;font-weight:400;color:#87909c">23:22</div>
<div class="tx " style="left:1456.80px;top:803.00px;font-size:22.0px;font-weight:400;color:#87909c">23:27</div>
<div class="tx " style="left:1570.60px;top:238.00px;font-size:22.0px;font-weight:400;color:#87909c">4.7Gi</div>
<div class="tx " style="left:1570.60px;top:345.00px;font-size:22.0px;font-weight:400;color:#87909c">3.7Gi</div>
<div class="tx " style="left:1569.60px;top:451.00px;font-size:22.0px;font-weight:400;color:#87909c">2.8Gi</div>
<div class="tx " style="left:1569.60px;top:558.00px;font-size:22.0px;font-weight:400;color:#87909c">1.9Gi</div>
<div class="tx " style="left:1569.60px;top:664.00px;font-size:22.0px;font-weight:400;color:#87909c">953.7Mi</div>
<div class="tx " style="left:1570.60px;top:770.00px;font-size:22.0px;font-weight:400;color:#87909c">0</div>
</body></html>
